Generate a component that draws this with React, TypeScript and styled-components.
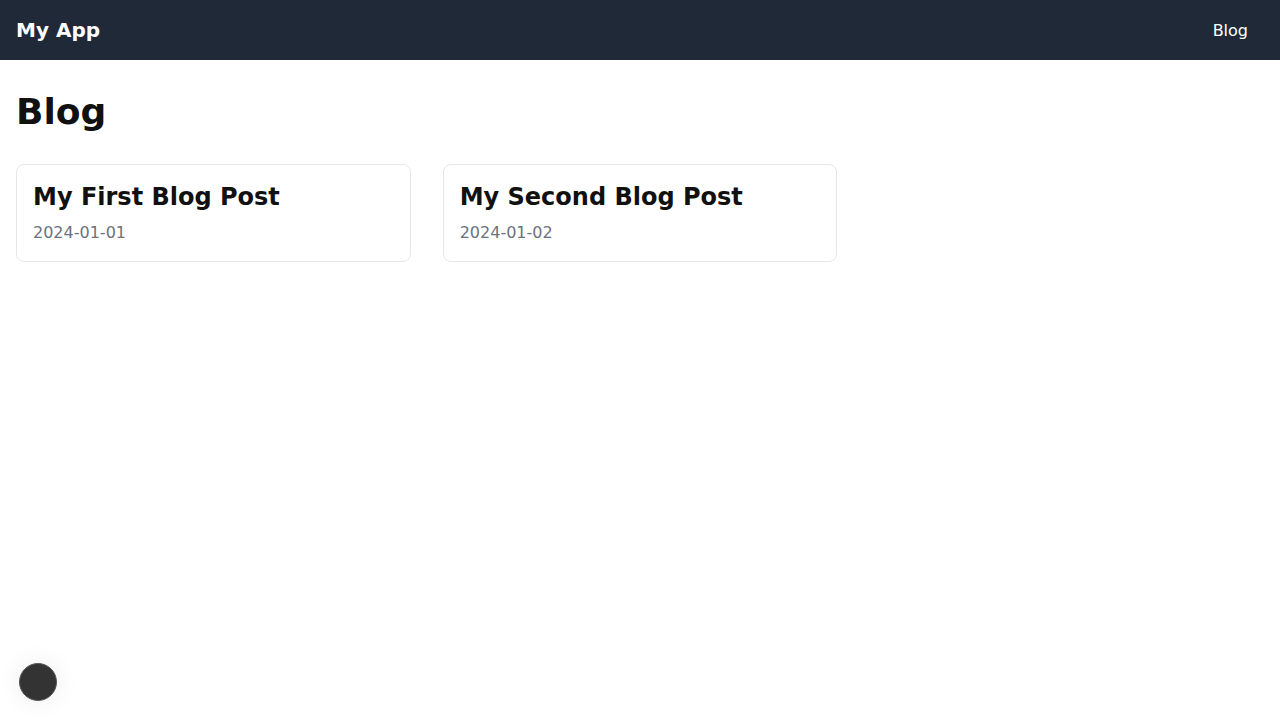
import React from "react";
import styled, { createGlobalStyle } from "styled-components";

const GlobalStyle = createGlobalStyle`
  body {
    margin: 0;
    font-family: "DejaVu Sans", sans-serif;
    background: #fff;
    color: #111827;
  }
`;

const Header = styled.header`
  height: 60px;
  background: #1f2937;
  display: flex;
  align-items: center;
  justify-content: space-between;
  padding: 0 16px;
  box-sizing: border-box;
`;

const Brand = styled.a`
  color: #fff;
  font-size: 20px;
  font-weight: bold;
  text-decoration: none;
`;

const NavLink = styled.a`
  color: #fff;
  font-size: 16px;
  text-decoration: none;
  padding: 8px 16px;
`;

const Main = styled.main`
  padding: 32px 16px;
`;

const PageTitle = styled.h1`
  font-size: 36px;
  line-height: 40px;
  font-weight: bold;
  margin: 0 0 32px;
  color: #111;
`;

const Grid = styled.div`
  display: grid;
  grid-template-columns: repeat(3, 1fr);
  gap: 32px;
`;

const Card = styled.article`
  border: 1px solid #e5e7eb;
  border-radius: 8px;
  padding: 16px;
`;

const CardTitle = styled.h2`
  font-size: 24px;
  line-height: 32px;
  font-weight: bold;
  margin: 0;
  color: #111;
`;

const CardDate = styled.p`
  font-size: 16px;
  line-height: 24px;
  color: #6b7280;
  margin: 8px 0 0;
`;

const DevButton = styled.button`
  position: fixed;
  left: 19px;
  bottom: 19px;
  width: 38px;
  height: 38px;
  border-radius: 50%;
  background: #333;
  border: 1px solid #555;
  box-shadow: 0 0 24px rgba(0, 0, 0, 0.08);
  padding: 0;
  cursor: pointer;
`;

const posts = [
  { title: "My First Blog Post", date: "2024-01-01" },
  { title: "My Second Blog Post", date: "2024-01-02" },
];

export default function App() {
  return (
    <>
      <GlobalStyle />
      <Header>
        <Brand href="#">My App</Brand>
        <nav>
          <NavLink href="#">Blog</NavLink>
        </nav>
      </Header>
      <Main>
        <PageTitle>Blog</PageTitle>
        <Grid>
          {posts.map((p) => (
            <Card key={p.title}>
              <CardTitle>{p.title}</CardTitle>
              <CardDate>{p.date}</CardDate>
            </Card>
          ))}
        </Grid>
      </Main>
      <DevButton aria-label="Open dev tools" />
    </>
  );
}
